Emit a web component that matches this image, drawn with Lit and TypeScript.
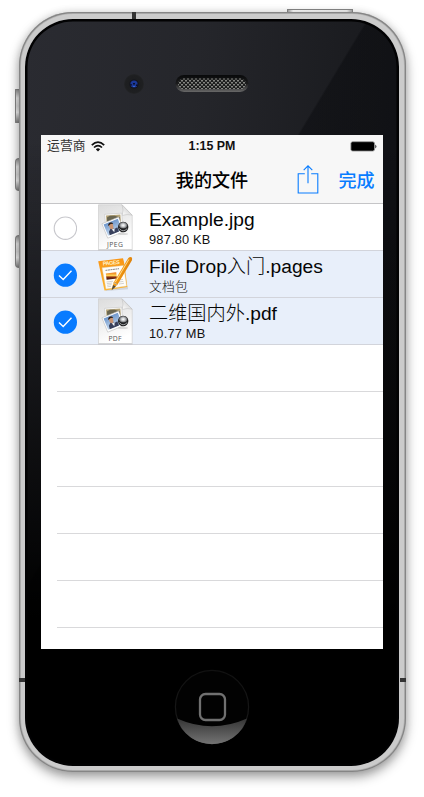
import { LitElement, html, css, svg } from "lit";
import { customElement, property } from "lit/decorators.js";

type Kind = "JPEG" | "PDF" | "PAGES";
interface FileItem {
  name: string;
  detail: string;
  kind: Kind;
  selected: boolean;
}

const FILES: FileItem[] = [
  { name: "Example.jpg", detail: "987.80 KB", kind: "JPEG", selected: false },
  { name: "File Drop入门.pages", detail: "文档包", kind: "PAGES", selected: true },
  { name: "二维国内外.pdf", detail: "10.77 MB", kind: "PDF", selected: true },
];

@customElement("file-icon")
export class FileIcon extends LitElement {
  @property() kind: Kind = "JPEG";

  static styles = css`
    :host { display: block; width: 36px; height: 47px; }
    svg { display: block; overflow: visible; }
    .label { font: 6.8px "Open Sans", "Lato", sans-serif; fill: #555; }
    .pages { font: bold 5.5px "Liberation Sans", sans-serif; fill: #fff3c8; }
  `;

  private document() {
    return svg`
      <defs>
        <linearGradient id="paper" x1="0" y1="0" x2="0.3" y2="1">
          <stop offset="0" stop-color="#dcdcdc"/><stop offset="0.5" stop-color="#ededed"/><stop offset="1" stop-color="#ffffff"/>
        </linearGradient>
        <linearGradient id="fold" x1="0" y1="1" x2="1" y2="0">
          <stop offset="0" stop-color="#ffffff"/><stop offset="1" stop-color="#bdbdbd"/>
        </linearGradient>
        <linearGradient id="sky" x1="0" y1="0" x2="0" y2="1">
          <stop offset="0" stop-color="#6f97cb"/><stop offset="1" stop-color="#c4d8ee"/>
        </linearGradient>
        <radialGradient id="lens">
          <stop offset="0" stop-color="#ffffff"/><stop offset="0.5" stop-color="#c4c7ca"/><stop offset="1" stop-color="#5a5b5e"/>
        </radialGradient>
      </defs>
      <path d="M1.5 .8H25L35.2 11.2V45.6H1.5Z" fill="url(#paper)" stroke="#cfcfcf" stroke-width=".7"/>
      <path d="M1 46.1H35.5" stroke="#bbb" stroke-width=".6"/>
      <path d="M25 .8Q27 6 25.2 11.4Q30 9.8 35.2 11.2Z" fill="url(#fold)" stroke="#bbb" stroke-width=".5"/>
      <g transform="rotate(-4 16 14)">
        <path d="M8 9.8H25V22H8Z" fill="#fff" stroke="#bbb" stroke-width=".5"/>
        <path d="M9.2 11H23.6V19H9.2Z" fill="#b5a478"/>
        <path d="M10 13L13 11.5L18 12L23 14V17H10Z" fill="#6a6650"/>
      </g>
      <g transform="rotate(-22 17 23)">
        <path d="M7 15.5H25V31H7Z" fill="#fff" stroke="#b5b5b5" stroke-width=".5"/>
        <path d="M8.3 16.8H23.6V29H8.3Z" fill="url(#sky)"/>
        <path d="M10 29L10.5 25.5L13.5 23L17 25L20 24.5V29Z" fill="#38405c"/>
        <path d="M12.7 19.5C13.2 17.2 16.8 17.2 17 20L16.3 23.5L14.6 24.6L12.7 22.8Z" fill="#c99472"/>
        <path d="M12.2 20C12.2 16.7 17.1 16.6 17.6 19.7L15 19Z" fill="#2a211e"/>
        <path d="M14 24.6L15.4 28L17 24.6Z" fill="#eef2f7"/>
      </g>
      <circle cx="26.2" cy="23" r="5.2" fill="#1f2022"/>
      <ellipse cx="26.2" cy="21.3" rx="4.1" ry="3.3" fill="url(#lens)"/>
      <path d="M22.4 24.6Q26 29 30.2 24.6" fill="none" stroke="#a0a2a5" stroke-width="1"/>
      <ellipse cx="26" cy="30" rx="5" ry="1" fill="#777" opacity=".25"/>
      <text class="label" x="18" y="42.7" text-anchor="middle" textLength=${this.kind === "JPEG" ? 16 : 13}>${this.kind}</text>`;
  }

  private pages() {
    return svg`
      <defs>
        <linearGradient id="pad" x1="0" y1="0" x2="0" y2="1">
          <stop offset="0" stop-color="#f99515"/><stop offset="1" stop-color="#ffb52d"/>
        </linearGradient>
        <linearGradient id="pen" x1="0" y1="0" x2="1" y2=".7">
          <stop offset="0" stop-color="#ffd375"/><stop offset=".5" stop-color="#f59a11"/><stop offset="1" stop-color="#b85b02"/>
        </linearGradient>
        <linearGradient id="sunset" x1="0" y1="0" x2="0" y2="1">
          <stop offset="0" stop-color="#ec6d10"/><stop offset=".5" stop-color="#ffe162"/><stop offset=".6" stop-color="#9d340e"/><stop offset="1" stop-color="#2d1617"/>
        </linearGradient>
      </defs>
      <path d="M7.5 37L31 35.5L31 38.3L9 40Z" fill="#888" opacity=".25"/>
      <path d="M1.2 10.3L26 7.3L27 11L30.4 36L7.5 39.5Z" fill="url(#pad)"/>
      <path d="M5 16.8L26.6 14.5L29.6 35L9 38Z" fill="#fffdf8" stroke="#d9c9a5" stroke-width=".4"/>
      <text class="pages" x="6" y="14.6" transform="rotate(-6 6 14.6)" textLength="17">PAGES</text>
      <path d="M8.5 19.4L22 17.7" stroke="#888" stroke-width="1" stroke-dasharray="2 .5"/>
      <path d="M9.5 31L16 30.2M9.8 32.6L15 32M10 34.2L14.5 33.6M10.3 35.8L14 35.3M22 29L26 28.4M22 31L26.4 30.4M22 33L27 32.3" stroke="#b5b5b5" stroke-width=".6"/>
      <path d="M8.8 22.4L19.2 21.2L20 27.4L9.6 28.8Z" fill="url(#sunset)"/>
      <path d="M31.3 7Q33 5.4 34.6 6.3Q35.6 7.6 34.8 9.4L20.6 33.5L15 38.8L16.6 31.5Z" fill="url(#pen)"/>
      <path d="M31.8 8.5L18.4 31" stroke="#ffe2a0" stroke-width=".9"/>
      <path d="M16 34L18.8 35.4L14.6 39.2Z" fill="#4c4a45"/>
      <path d="M16.6 31.6L20.6 33.7" stroke="#bbb" stroke-width="1"/>`;
  }

  render() {
    return html`<svg width="36" height="47" viewBox="0 0 36 47">${this.kind === "PAGES" ? this.pages() : this.document()}</svg>`;
  }
}

@customElement("app-root")
export class AppRoot extends LitElement {
  static styles = css`
    :host {
      display: block; position: relative; width: 424px; height: 797px; overflow: hidden; background: #fff;
      font-family: "Liberation Sans", "Noto Sans CJK SC", sans-serif; color: #111;
    }
    * { box-sizing: border-box; }
    .phone {
      position: relative; width: 387px; height: 760px; margin: 12px 0 0 18.5px; padding: 7px 6.5px 6px;
      border-radius: 54px; background: #cbcbcb;
      box-shadow: inset 0 0 0 1.2px #858585, inset 0 0 0 2px #b3b3b3, 0 5px 12px rgba(0,0,0,.38), 0 0 9px rgba(0,0,0,.1);
    }
    .glass {
      width: 374px; height: 747px; padding: 0 16px; border-radius: 48px; overflow: hidden;
      background:
        linear-gradient(to bottom, transparent 0, transparent 120px, rgba(0,0,0,.3) 260px, #000 600px),
        linear-gradient(121deg, transparent 0 293px, rgba(5,6,9,.4) 295px 100%) 0 0 / 374px 747px no-repeat,
        linear-gradient(95deg, #2a2b31 0%, #25262b 40%, #1b1c20 75%, #15161a 100%);
      box-shadow: inset 0 0 0 2.5px #020203;
    }
    .top { height: 116px; display: flex; padding: 55px 0 0 83px; gap: 31px; }
    .camera { width: 20px; height: 20px; border-radius: 50%; display: grid; place-items: center;
      background: radial-gradient(circle, #1d1e20 0 40%, #1e1f21 60%, #303134 100%); }
    .speaker { display: block; }
    .screen { width: 342px; height: 514px; background: #fff; overflow: hidden; }
    .bar { height: 69px; background: #f7f7f7; border-bottom: 1px solid #c5c5c7; }
    .status { height: 22px; display: grid; grid-template-columns: 1fr auto 1fr; align-items: center; padding: 0 6px; font-size: 12.8px; }
    .carrier { display: flex; align-items: center; gap: 5px; color: #333; line-height: 18px; letter-spacing: .1px; }
    .time { font-weight: 700; font-size: 12.4px; }
    .battery { justify-self: end; }
    .nav { height: 46px; display: grid; grid-template-columns: 1fr auto 1fr; align-items: center; padding: 0 8.5px; }
    .title { grid-column: 2; font-size: 18.1px; font-weight: 500; font-family: "Noto Sans CJK SC", sans-serif; color: #000; line-height: 24px; margin-top: -2px; }
    .actions { justify-self: end; display: flex; align-items: center; gap: 20px; color: #087cff; }
    .done { font-size: 18px; font-weight: 500; font-family: "Noto Sans CJK SC", sans-serif; line-height: 24px; margin-top: -2px; }
    .row { height: 47.1px; display: flex; align-items: center; box-shadow: inset 0 -1px #d2d4db; }
    .row.selected { background: #e8effa; }
    .check { width: 24px; margin-left: 12px; flex: none; }
    file-icon { margin: 0 0 0 20px; flex: none; }
    .body { flex: 1; height: 47.1px; margin-left: 16px; padding-top: 4px; white-space: nowrap; }
    .name { font-size: 19.2px; line-height: 24px; color: #050505; font-weight: 300; }
    .detail { font-size: 12.8px; line-height: 15px; color: #111; font-weight: 300; letter-spacing: .2px; }
    .empty { height: 47.1px; margin-left: 16px; border-bottom: 1px solid #d9d9db; }
    .bottom { height: 117px; display: flex; justify-content: center; padding-top: 20px; }
    .seam { position: absolute; background: #333; }
    .seam.top-seam { left: 113.5px; top: 0; width: 4px; height: 6.5px; }
    .seam.left-seam, .seam.right-seam { width: 6px; height: 4px; top: 666px; }
    .seam.left-seam { left: 0; }
    .seam.right-seam { right: 0; }
    .key { position: absolute; left: 15px; width: 5px; border: 1px solid #888; border-right: 0;
      background: linear-gradient(#999, #eee 25%, #ddd 50%, #f5f5f5 70%, #888); }
    .mute { top: 89px; height: 34px; border-radius: 1px; }
    .up { top: 158px; height: 33px; border-radius: 4px 0 0 4px; }
    .down { top: 235px; height: 33px; border-radius: 4px 0 0 4px; }
    .power { position: absolute; left: 287px; top: 8.5px; width: 66px; height: 5px; border: 1px solid #888; border-width: 1px 1px 0;
      background: linear-gradient(90deg, #aaa, #fff 8%, #f4f4f4 92%, #aaa); }
  `;

  private camera() {
    return html`<svg class="speaker" width="10" height="10" viewBox="0 0 10 10">
      <circle cx="5" cy="5" r="4.6" fill="#12131c"/>
      <circle cx="5" cy="5" r="3.6" fill="#1a3796"/>
      <path d="M4 4H6V5.5H4ZM7 5.5H9V7H7ZM1 5.2H3V6.5H1Z" fill="#0c102b"/>
      <path d="M4 7H6V8H4Z" fill="#3364cf"/>
    </svg>`;
  }

  private speaker() {
    return html`<svg class="speaker" width="74" height="19" viewBox="0 0 74 19">
      <defs>
        <pattern id="mesh" width="4" height="4" patternUnits="userSpaceOnUse">
          <path d="M0 0H4V4H0Z" fill="#1c1d1d"/><path d="M0 0H2V1.6H0ZM2 2H4V3.6H2Z" fill="#858682"/>
        </pattern>
        <linearGradient id="rim" x1="0" y1="0" x2="0" y2="1"><stop offset="0" stop-color="#08090a"/><stop offset=".5" stop-color="#1b1b1c"/><stop offset="1" stop-color="#686868"/></linearGradient>
      </defs>
      <rect x=".5" y="1" width="73" height="17" rx="8.5" fill="url(#rim)"/>
      <rect x="3" y="4.5" width="68" height="10.5" rx="5.25" fill="url(#mesh)"/>
    </svg>`;
  }

  private home() {
    return html`<svg width="76" height="76" viewBox="0 0 76 76">
      <defs>
        <linearGradient id="shine" x1="0" y1="0" x2="0" y2="1"><stop offset="0" stop-color="#343434"/><stop offset="1" stop-color="#737373"/></linearGradient>
        <linearGradient id="ring" x1="0" y1="0" x2="0" y2="1"><stop offset="0" stop-color="#111"/><stop offset=".7" stop-color="#181818"/><stop offset="1" stop-color="#666"/></linearGradient>
      </defs>
      <circle cx="38" cy="38" r="36.6" fill="#020202" stroke="url(#ring)" stroke-width="1.2"/>
      <path d="M3 49.5Q38 65 73 49.5A36.8 36.8 0 0 1 3 49.5Z" fill="url(#shine)"/>
      <rect x="26" y="25" width="25" height="26" rx="5.5" fill="none" stroke="#707070" stroke-width="2.3"/>
    </svg>`;
  }

  private check(selected: boolean) {
    return html`<svg class="check" width="24" height="24" viewBox="0 0 24 24">
      ${selected
        ? svg`<circle cx="12.4" cy="12.2" r="11.6" fill="#087bff"/><path d="M6 12.4L10.2 16.4L18.5 7.8" fill="none" stroke="#fff" stroke-width="1.4"/>`
        : svg`<circle cx="12.4" cy="12.2" r="11.2" fill="#fff" stroke="#c7c7cc" stroke-width="1.1"/>`}
    </svg>`;
  }

  render() {
    return html`
      <div class="key mute"></div><div class="key up"></div><div class="key down"></div><div class="power"></div>
      <div class="phone">
        <div class="seam top-seam"></div><div class="seam left-seam"></div><div class="seam right-seam"></div>
        <div class="glass">
          <div class="top"><div class="camera">${this.camera()}</div>${this.speaker()}</div>
          <div class="screen">
            <div class="bar">
              <div class="status">
                <div class="carrier">运营商
                  <svg width="14" height="11" viewBox="0 0 14 11"><g fill="none" stroke="#111" stroke-width="1.7"><path d="M.8 4.2Q7-1.8 13.2 4.2"/><path d="M3 6.5Q7 2.8 11 6.5"/></g><path d="M4.8 8.2Q7 6.3 9.2 8.2L7 10.4Z" fill="#111"/></svg>
                </div>
                <div class="time">1:15 PM</div>
                <svg class="battery" width="27" height="11" viewBox="0 0 27 11"><rect x=".9" y=".7" width="23.6" height="9.4" rx="1.8" fill="#000" stroke="#999" stroke-width=".8"/><path d="M25.3 3.6Q27.5 5.5 25.3 7.4Z" fill="#222"/></svg>
              </div>
              <div class="nav">
                <div class="title">我的文件</div>
                <div class="actions">
                  <svg width="22" height="30" viewBox="0 0 22 30" fill="none" stroke="currentColor" stroke-width="1.1"><path d="M7.8 8.8H1.2V28H20.8V8.8H14.2M11 18.3V.9M6.7 5.2L11 .9L15.3 5.2"/></svg>
                  <span class="done">完成</span>
                </div>
              </div>
            </div>
            ${FILES.map((f) => html`
              <div class="row ${f.selected ? "selected" : ""}">
                ${this.check(f.selected)}
                <file-icon .kind=${f.kind}></file-icon>
                <div class="body"><div class="name">${f.name}</div><div class="detail">${f.detail}</div></div>
              </div>`)}
            ${[0, 1, 2, 3, 4, 5].map(() => html`<div class="empty"></div>`)}
          </div>
          <div class="bottom">${this.home()}</div>
        </div>
      </div>`;
  }
}
